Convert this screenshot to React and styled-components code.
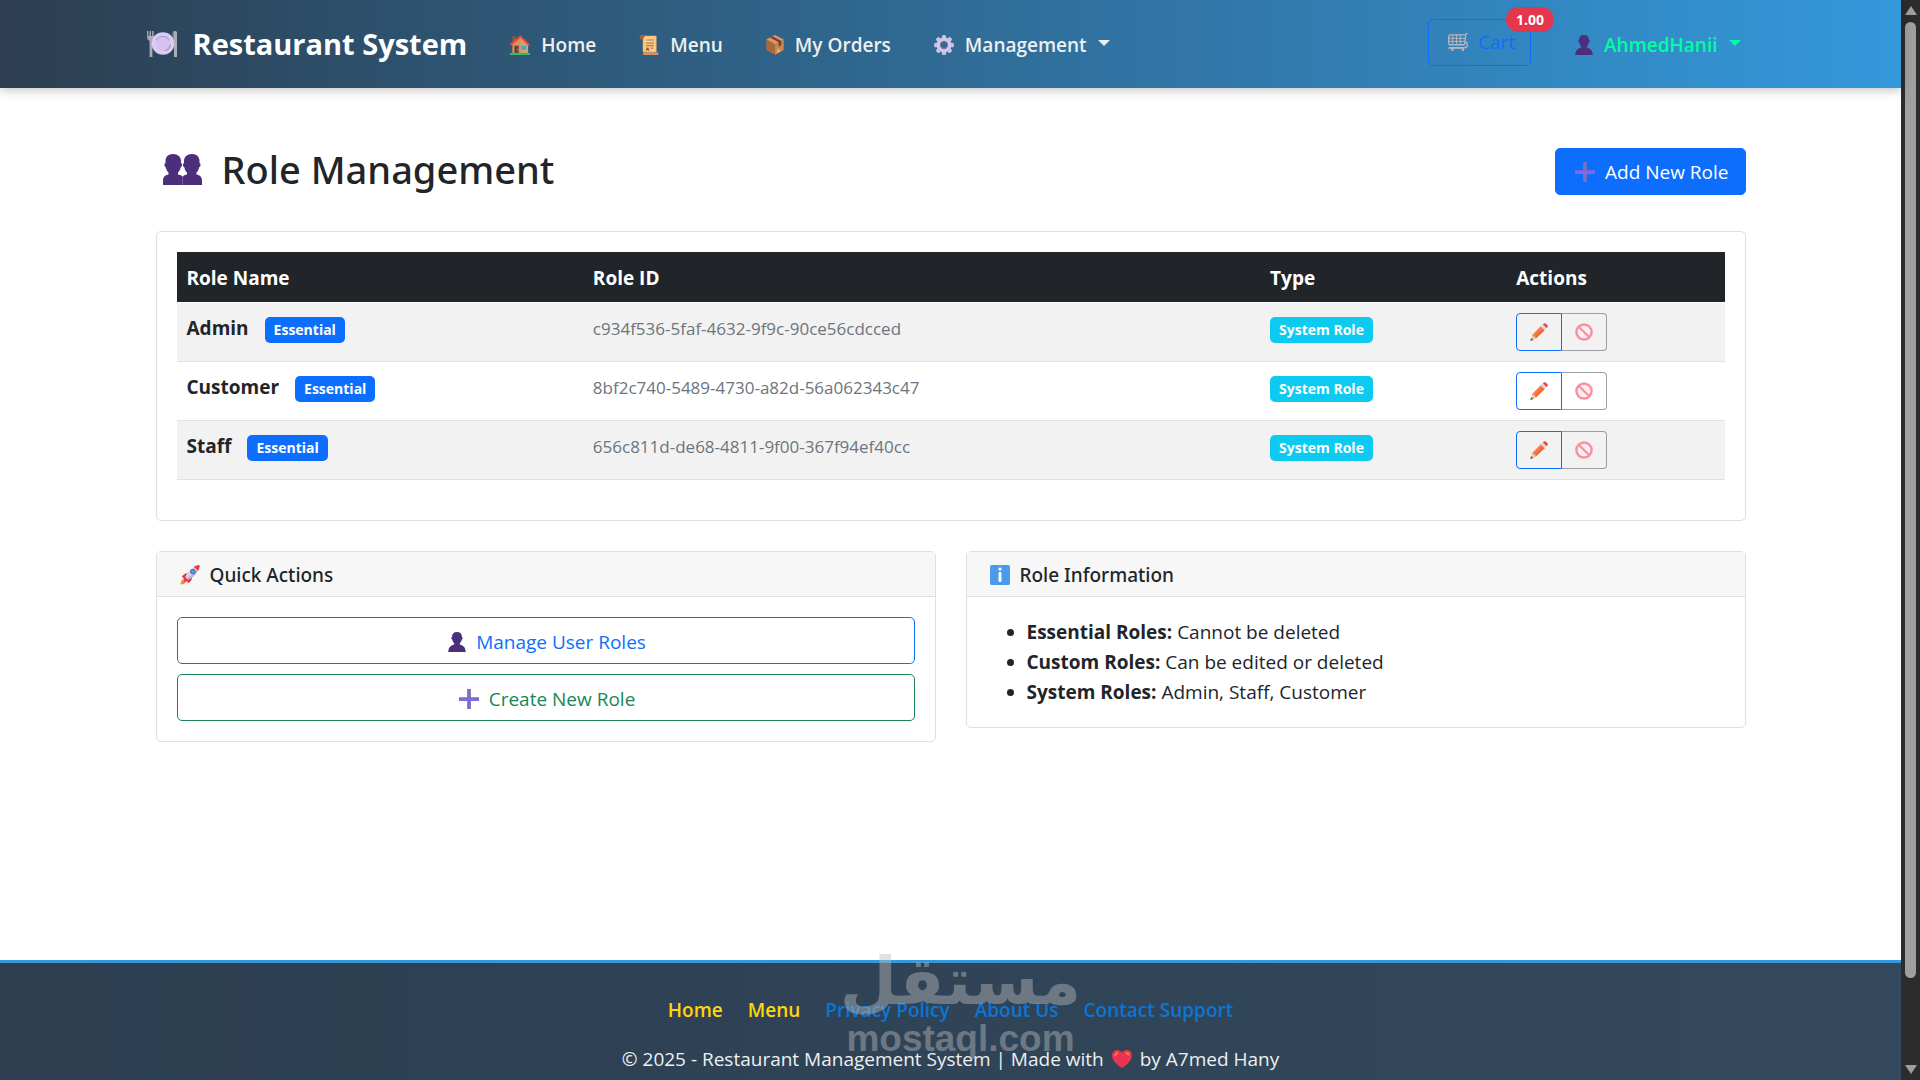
import React from "react";
import styled, { createGlobalStyle, css } from "styled-components";

const font = '"Open Sans", "Noto Sans", "DejaVu Sans", sans-serif';
const headingFont = '"Noto Sans", "Open Sans", "DejaVu Sans", sans-serif';

const Global = createGlobalStyle`
  *, *::before, *::after { box-sizing: border-box; }
  body { margin: 0; background: #fff; color: #212529; font: 400 19px/30px ${font}; }
  a { text-decoration: none; color: inherit; }
  button { font: inherit; cursor: pointer; }
`;

/* ---------- icons ---------- */

const Svg = styled.svg`
  display: block;
  flex: none;
  width: ${(p) => p.$w || 20}px;
  height: ${(p) => p.$h || p.$w || 20}px;
`;

const Icon = ({ w, h, box = "0 0 32 32", children }) => (
  <Svg $w={w} $h={h} viewBox={box} aria-hidden="true">
    {children}
  </Svg>
);

const PlateIcon = () => (
  <Icon w={30} h={26} box="0 0 30 26">
    <g fill="#a9adb8">
      <path d="M0 0h1.4v5h1.2V0H4v5h1.2V0h1.4v5H8V1l-.2 7L5.4 10v16H2.6V10L.3 8z" />
      <path d="M27 0h1.2a2 2 0 0 1 1.8 2v24h-3z" />
      <path d="M27 0a2 2 0 0 0-1.6 2v13H27z" fill="#7f8592" />
    </g>
    <circle cx="16" cy="12.5" r="11.3" fill="#dccbf3" />
    <circle cx="16" cy="12.5" r="7.6" fill="#d5c2f0" />
    <path d="M9.2 9a7.6 7.6 0 0 1 13 .2" fill="none" stroke="#b79ddd" strokeWidth="1.2" />
    <path d="M23.4 13.5a7.6 7.6 0 0 1-5.2 6.2" fill="none" stroke="#a58ec7" strokeWidth="1.2" />
  </Icon>
);

const HouseIcon = () => (
  <Icon>
    <path fill="#8d5a45" d="M4 2h5v10H4z" />
    <path fill="#e0a066" d="M4 14 17 4l12 12v13H4z" />
    <path fill="#c98350" d="M4 14 17 4v25H4z" opacity=".45" />
    <path fill="#6d3f3a" d="M7 17h7v12H7z" />
    <path fill="#f9c23c" d="M12 22h1.5v2H12z" />
    <path fill="#26b3f0" d="M18 17h8v7h-8z" />
    <path fill="none" stroke="#f0473e" strokeWidth="3.2" strokeLinecap="round" strokeLinejoin="round" d="m2 15 14.500-12.500L30 15.500" />
    <path fill="#36b864" d="M0 28.500h32V32H0z" />
  </Icon>
);

const ScrollIcon = () => (
  <Icon>
    <path fill="#f9be72" d="M5 1h23v27H9c-2 0-3-1-3-3V6z" />
    <path fill="#ffd08d" d="M9 3h17v23H9z" />
    <path fill="#a65f45" d="M1 2c0-1 1-2 3-2h6L6 7H3C1 7 1 4 1 2z" />
    <path fill="#e08f5c" d="M9 28h22c1 0 1 4-2 4H9c-4 0-4-4 0-4z" />
    <path stroke="#b77945" strokeWidth="1.800" d="M12 8h12M11 13h13M11 17h13M11 21h5M18 21h5" />
    <path stroke="#8a4c34" strokeWidth="2" d="m11 25 3-3 2 3" fill="none" />
  </Icon>
);

const BoxIcon = () => (
  <Icon w={18} h={20} box="0 0 28 32">
    <path fill="#d99a62" d="M14 0 28 7 14 15 0 7z" />
    <path fill="#a9693f" d="m0 7 14 8v17L0 24z" />
    <path fill="#c88650" d="m28 7-14 8v17l14-8z" />
    <path fill="#7a3a34" d="m6 4 14 7.500v7l4-2V9.500L10 2z" />
    <path stroke="#ead0ae" strokeWidth="1.600" d="m17 25 4-2.200M17 28l6-3.300" />
  </Icon>
);

const GearIcon = () => (
  <Icon>
    <g fill="#c6bfe6">
      {[0, 45, 90, 135, 180, 225, 270, 315].map((a) => (
        <rect key={a} x="12.500" y="0" width="7" height="8" rx="2.500" transform={`rotate(${a} 16 16)`} />
      ))}
    </g>
    <circle cx="16" cy="16" r="8.800" fill="none" stroke="#d0c9eb" strokeWidth="6" />
    <circle cx="16" cy="16" r="5.800" fill="none" stroke="#7d7a99" strokeWidth="1.800" />
  </Icon>
);

const CartIcon = () => (
  <Icon w={20} h={18} box="0 0 32 29">
    <g fill="none" stroke="#b9b4bd" strokeWidth="2.200" strokeLinejoin="round" strokeLinecap="round">
      <path d="M31 0c-3 1-3 3-3 5l-1 11c0 2-1 3-3 3H4c-2 0-3-1-3-3V6c0-2 1-3 3-3h22" />
      <path d="M1 8.500h26M1 13.500h25M7.500 3v16M13.500 3v16M19.500 3v16" strokeWidth="1.600" />
      <path d="M27 15c3-1 4 1 4 4 0 4-2 5-5 5H2" />
      <path d="M2 24h22" strokeWidth="3" />
      <circle cx="7" cy="27" r="1" />
      <circle cx="24" cy="27" r="1" />
    </g>
  </Icon>
);

const bust = "M14 0c5 0 8 3 8 8 1.500 0 1.500 4-.3 4-.7 3-2 5-3.200 6v2c4 1 9 3 9.500 12H0c.5-9 5.500-11 9.500-12v-2c-1.200-1-2.500-3-3.200-6C4.500 12 4.500 8 6 8c0-5 3-8 8-8z";

const UserIcon = () => (
  <Icon w={18} h={20} box="0 0 28 32">
    <path fill="#4c2f7c" d={bust} />
  </Icon>
);

const UsersIcon = () => (
  <Icon w={39} h={31} box="0 0 39 31">
    <g fill="#4c2f7c">
      <path d="M10 0c5 0 8 3 8 7v2c1.400 0 1.400 4-.2 4-.6 3-1.800 4.500-2.800 5.500v2c3 .6 6 1.500 6 6.500v4H0v-4c0-5 3-5.900 5.500-6.500v-2c-1-1-2.200-2.500-2.800-5.500-1.600 0-1.600-4-.2-4V7c0-4 2.500-7 7.500-7z" />
      <path d="M29 0c5 0 7.500 3 7.500 7v2c1.400 0 1.400 4-.2 4-.6 3-1.800 4.500-2.800 5.500v2c2.500.6 5.500 1.500 5.500 6.500v4H19v-4c0-5 2-5.900 5-6.500v-2c-1-1-2.200-2.500-2.800-5.500-1.600 0-1.600-4-.2-4V7c0-4 3-7 8-7z" />
    </g>
    <path d="M19.500 31v-4c0-2.500 0-4.200 1.500-5.500" fill="none" stroke="#7a68a6" strokeWidth=".8" />
  </Icon>
);

const PlusIcon = () => (
  <Icon>
    <path fill="#7a6fc0" d="M13 0h6v13h13v6H19v13h-6V19H0v-6h13z" />
    <path fill="#8a63f5" d="M0 16h32v3H0z" />
  </Icon>
);

const PencilIcon = () => (
  <Icon w={18} h={18}>
    <path fill="#fb7a45" d="m20 5 7 7L10 28l-7-6z" />
    <path fill="#e4602f" d="m23.500 8.500 3.500 3.500L10 28l-3-3z" opacity=".55" />
    <path fill="#dcd6e6" d="m19 6 4-4 7 7-4 4z" />
    <path fill="#ee3f3f" d="m24 1.500c1.500-1.500 3-1.500 4.500 0L31 4c1 1.500 1 2.500-.5 4l-1 1L23 2.500z" />
    <path fill="#f2c69b" d="m4.500 20.500 7 7L2 31z" />
    <path fill="#5e5464" d="m2 26.500 4 3.500-5.500 2z" />
  </Icon>
);

const BannedIcon = () => (
  <Icon w={18} h={18}>
    <circle cx="16" cy="16" r="13.500" fill="#fbeef5" stroke="#f9919f" strokeWidth="4.400" />
    <path d="m7 7 18 18" stroke="#f9919f" strokeWidth="4" />
  </Icon>
);

const RocketIcon = () => (
  <Icon>
    <path fill="#fb8b3c" d="M1 31c0-4 1-7 4-7l4 4c-1 2-4 3-8 3z" />
    <path fill="#e0344b" d="m3 18 6-5 5 1-7 9zM14 29l5-6-1-6-8 8z" />
    <path fill="#d7d3e4" d="M8 20C12 10 19 3 29 2c1 10-6 17-17 22z" />
    <path fill="#b8b2cc" d="M29 2c1 10-6 17-17 22l-2-2C19 17 25 11 29 2z" />
    <path fill="#f0384d" d="M22 3c3-2 6-3 9-3 1 3 0 6-2 9z" />
    <path fill="#f0384d" d="m8 19 5 5-5 4-3-4z" />
    <circle cx="20.500" cy="10.500" r="3.600" fill="#4aa3ec" stroke="#45608d" strokeWidth="1.600" />
  </Icon>
);

const InfoIcon = () => (
  <Icon>
    <rect width="32" height="32" rx="3" fill="#4c9aec" />
    <circle cx="16" cy="6.500" r="2.600" fill="#fff" />
    <rect x="13.700" y="11" width="4.600" height="16" rx="2" fill="#fff" />
  </Icon>
);

const HeartIcon = () => (
  <Icon w={20} h={18} box="0 0 32 29">
    <path fill="#ea3350" d="M16 29C6 23 0 16 0 9c0-5 3-9 8-9 4 0 7 2 8 5 1-3 4-5 8-5 5 0 8 4 8 9 0 7-6 14-16 20z" />
    <path fill="#fb8148" d="M7 4c-2 1-3 3-3 5s2 1 3-1 3-2 3-3-1-2-3-1zM21 5c1 0 3 4 5 4s3-2 1-4-6-2-6 0z" />
  </Icon>
);

/* ---------- shell ---------- */

const Shell = styled.div`
  display: flex;
  height: 100vh;
  overflow: hidden;
`;

const Page = styled.div`
  display: flex;
  flex: 1;
  flex-direction: column;
  min-width: 0;
`;

const ScrollTrack = styled.div`
  display: flex;
  flex: none;
  flex-direction: column;
  align-items: center;
  gap: 7px;
  width: 19px;
  padding: 6px 0;
  background: #2c2c2c;
`;

const ScrollArrow = styled.span`
  border: 6px solid transparent;
  border-top-width: ${(p) => (p.$down ? 9 : 0)}px;
  border-bottom-width: ${(p) => (p.$down ? 0 : 9)}px;
  border-${(p) => (p.$down ? "top" : "bottom")}-color: #9f9f9f;
`;

const ScrollRail = styled.div`
  display: grid;
  flex: 1;
  grid-template-rows: 12fr 1fr;
  width: 11px;
`;

const ScrollThumb = styled.div`
  border-radius: 6px;
  background: #9f9f9f;
`;

/* ---------- navbar ---------- */

const Navbar = styled.header`
  position: relative;
  flex: none;
  background: linear-gradient(90deg, #2c3e50, #3498db);
  box-shadow: 0 2px 10px rgba(0, 0, 0, 0.25);
`;

const NavInner = styled.div`
  display: flex;
  align-items: center;
  width: 100%;
  max-width: 1620px;
  height: 88px;
  margin: 0 auto;
  padding: 0 20px 0 6px;
`;

const Brand = styled.a`
  display: flex;
  align-items: center;
  gap: 16px;
  color: #fff;
  font-size: 29px;
  font-weight: 700;
  line-height: 44px;
  white-space: nowrap;
`;

const NavLinks = styled.nav`
  display: flex;
  gap: 43px;
  margin-left: 43px;
`;

const navItem = css`
  display: flex;
  align-items: center;
  gap: 11px;
  padding: 2px 0 0;
  border: 0;
  background: none;
  color: ${(p) => (p.$user ? "#00ffa2" : "#ecf0f1")};
  font-weight: 600;
  line-height: 30px;
  white-space: nowrap;
`;

const NavLink = styled.a`${navItem}`;
const NavToggle = styled.button`${navItem}`;

const Caret = styled.span`
  margin-bottom: 4px;
  border: 6px solid transparent;
  border-top-color: currentColor;
  border-bottom: 0;
`;

const NavRight = styled.div`
  display: flex;
  align-items: center;
  gap: 44px;
  margin-left: auto;
`;

const CartButton = styled.button`
  position: relative;
  display: flex;
  align-items: center;
  gap: 10px;
  height: 47px;
  margin-bottom: 4px;
  padding: 0 15px 0 19px;
  border: 1px solid #0d6efd;
  border-radius: 5px;
  background: none;
  color: #0d6efd;
`;

const CartBadge = styled.span`
  position: absolute;
  top: -13px;
  right: -24px;
  padding: 0 10px;
  border-radius: 13px;
  background: #e4364c;
  color: #fff;
  font-size: 14px;
  font-weight: 700;
  line-height: 25px;
`;

/* ---------- content ---------- */

const Main = styled.main`
  flex: 1;
  width: 100%;
  max-width: 1620px;
  min-height: 0;
  margin: 0 auto;
  padding: 55px 15px 0;
`;

const TitleRow = styled.div`
  display: flex;
  align-items: center;
  justify-content: space-between;
  margin-bottom: 32px;
`;

const Title = styled.h1`
  display: flex;
  align-items: center;
  gap: 20px;
  margin: 0;
  padding: 2px 0 6px 7px;
  font-family: ${headingFont};
  font-size: 38px;
  font-weight: 500;
  line-height: 48px;
`;

const tones = {
  solid: css`border-color: #0d6efd; background: #0d6efd; color: #fff;`,
  primary: css`border-color: #0d6efd; background: #fff; color: #0d6efd;`,
  success: css`border-color: #198754; background: #fff; color: #198754;`,
};

const Button = styled.button`
  display: flex;
  align-items: center;
  justify-content: center;
  gap: 10px;
  height: 47px;
  padding: 2px 16px 0 19px;
  border: 1px solid;
  border-radius: 5px;
  ${(p) => tones[p.$tone]}
`;

const Card = styled.section`
  border: 1px solid #dfdfdf;
  border-radius: 5px;
  background: #fff;
`;

const CardHeader = styled.h2`
  display: flex;
  align-items: center;
  gap: 10px;
  height: 45px;
  margin: 0;
  padding: 2px 23px 0;
  border-bottom: 1px solid #dfdfdf;
  background: #f7f7f7;
  font-family: ${headingFont};
  font-size: 19px;
  font-weight: 500;
`;

const CardBody = styled.div`
  padding: 20px;
`;

const Stack = styled.div`
  display: grid;
  gap: 10px;
`;

const Columns = styled.div`
  display: grid;
  grid-template-columns: 1fr 1fr;
  gap: 30px;
  align-items: start;
  margin-top: 30px;
`;

const Table = styled.table`
  width: 100%;
  margin-bottom: 20px;
  border-collapse: separate;
  border-spacing: 0;
  table-layout: fixed;
`;

const Th = styled.th`
  width: ${(p) => p.$w};
  padding: 11px 10px 9px;
  border-bottom: 1px solid #fff;
  background: #212529;
  background-clip: padding-box;
  color: #fff;
  font-weight: 700;
  text-align: left;
`;

const Row = styled.tr`
  &:nth-child(odd) { background: #f2f2f2; }
`;

const Td = styled.td`
  padding: 10px;
  border-bottom: 1px solid #dee2e6;
  vertical-align: top;
`;

const RoleCell = styled.div`
  display: flex;
  align-items: flex-end;
  gap: 16px;
  height: 30px;
`;

const RoleId = styled.span`
  color: #6c757d;
  font-size: 17px;
`;

const Badge = styled.span`
  padding: 0 9px;
  border-radius: 5px;
  background: ${(p) => (p.$info ? "#0dcaf0" : "#0d6efd")};
  color: #fff;
  font-size: 14px;
  font-weight: 700;
  line-height: 26px;
  white-space: nowrap;
`;

const ButtonGroup = styled.div`
  display: flex;
`;

const IconButton = styled.button`
  display: grid;
  place-items: center;
  width: ${(p) => (p.$muted ? 45 : 46)}px;
  height: 38px;
  padding: 0;
  border: 1px solid ${(p) => (p.$muted ? "#9b9fa3" : "#0d6efd")};
  border-left-width: ${(p) => (p.$muted ? 0 : 1)}px;
  border-radius: ${(p) => (p.$muted ? "0 4px 4px 0" : "4px 0 0 4px")};
  background: transparent;
`;

const InfoList = styled.ul`
  margin: 0;
  padding-left: 40px;
`;

/* ---------- footer ---------- */

const Footer = styled.footer`
  position: relative;
  display: flex;
  flex: none;
  flex-direction: column;
  align-items: center;
  gap: 19px;
  padding: 32px 20px 6px;
  border-top: 3px solid #3498db;
  background: linear-gradient(90deg, #2c3e50, #34495e);
  color: #ecf0f1;
`;

const FooterLinks = styled.nav`
  display: flex;
  gap: 25px;
`;

const FooterLink = styled.a`
  color: ${(p) => (p.$gold ? "#ffd60a" : "#0d75d3")};
  font-weight: 600;
`;

const Copyright = styled.p`
  display: flex;
  align-items: center;
  gap: 8px;
  margin: 0;
`;

const Watermark = styled.div`
  position: absolute;
  top: -18px;
  left: 50%;
  display: flex;
  flex-direction: column;
  align-items: center;
  width: 232px;
  margin-left: -106px;
  color: #bcbcbc;
  opacity: 0.43;
  pointer-events: none;
  white-space: nowrap;
`;

const WatermarkArabic = styled.span`
  font: 700 66px/74px "DejaVu Sans", sans-serif;
`;

const WatermarkLatin = styled.span`
  font: 700 37px/40px "Liberation Sans", sans-serif;
`;

const roles = [
  ["Admin", "c934f536-5faf-4632-9f9c-90ce56cdcced"],
  ["Customer", "8bf2c740-5489-4730-a82d-56a062343c47"],
  ["Staff", "656c811d-de68-4811-9f00-367f94ef40cc"],
];

const facts = [
  ["Essential Roles:", "Cannot be deleted"],
  ["Custom Roles:", "Can be edited or deleted"],
  ["System Roles:", "Admin, Staff, Customer"],
];

export default function App() {
  return (
    <>
      <Global />
      <Shell>
        <Page>
          <Navbar>
            <NavInner>
              <Brand href="#"><PlateIcon />Restaurant System</Brand>
              <NavLinks aria-label="Main">
                <NavLink href="#"><HouseIcon />Home</NavLink>
                <NavLink href="#"><ScrollIcon />Menu</NavLink>
                <NavLink href="#"><BoxIcon />My Orders</NavLink>
                <NavToggle type="button"><GearIcon />Management<Caret /></NavToggle>
              </NavLinks>
              <NavRight>
                <CartButton type="button">
                  <CartIcon />Cart<CartBadge>1.00</CartBadge>
                </CartButton>
                <NavToggle type="button" $user><UserIcon />AhmedHanii<Caret /></NavToggle>
              </NavRight>
            </NavInner>
          </Navbar>

          <Main>
            <TitleRow>
              <Title><UsersIcon />Role Management</Title>
              <Button type="button" $tone="solid"><PlusIcon />Add New Role</Button>
            </TitleRow>

            <Card>
              <CardBody>
                <Table>
                  <thead>
                    <tr>
                      <Th $w="26.25%">Role Name</Th>
                      <Th $w="43.75%">Role ID</Th>
                      <Th $w="15.9%">Type</Th>
                      <Th>Actions</Th>
                    </tr>
                  </thead>
                  <tbody>
                    {roles.map(([name, id]) => (
                      <Row key={id}>
                        <Td>
                          <RoleCell><strong>{name}</strong><Badge>Essential</Badge></RoleCell>
                        </Td>
                        <Td><RoleId>{id}</RoleId></Td>
                        <Td><RoleCell><Badge $info>System Role</Badge></RoleCell></Td>
                        <Td>
                          <ButtonGroup>
                            <IconButton type="button" aria-label={`Edit ${name}`}><PencilIcon /></IconButton>
                            <IconButton type="button" $muted disabled aria-label={`Delete ${name}`}><BannedIcon /></IconButton>
                          </ButtonGroup>
                        </Td>
                      </Row>
                    ))}
                  </tbody>
                </Table>
              </CardBody>
            </Card>

            <Columns>
              <Card>
                <CardHeader><RocketIcon />Quick Actions</CardHeader>
                <CardBody>
                  <Stack>
                    <Button type="button" $tone="primary"><UserIcon />Manage User Roles</Button>
                    <Button type="button" $tone="success"><PlusIcon />Create New Role</Button>
                  </Stack>
                </CardBody>
              </Card>
              <Card>
                <CardHeader><InfoIcon />Role Information</CardHeader>
                <CardBody>
                  <InfoList>
                    {facts.map(([label, text]) => (
                      <li key={label}><strong>{label}</strong> {text}</li>
                    ))}
                  </InfoList>
                </CardBody>
              </Card>
            </Columns>
          </Main>

          <Footer>
            <FooterLinks aria-label="Footer">
              <FooterLink href="#" $gold>Home</FooterLink>
              <FooterLink href="#" $gold>Menu</FooterLink>
              <FooterLink href="#">Privacy Policy</FooterLink>
              <FooterLink href="#">About Us</FooterLink>
              <FooterLink href="#">Contact Support</FooterLink>
            </FooterLinks>
            <Copyright>
              © 2025 - Restaurant Management System | Made with <HeartIcon /> by A7med Hany
            </Copyright>
            <Watermark>
              <WatermarkArabic lang="ar" dir="rtl">مستقل</WatermarkArabic>
              <WatermarkLatin>mostaql.com</WatermarkLatin>
            </Watermark>
          </Footer>
        </Page>

        <ScrollTrack aria-hidden="true">
          <ScrollArrow />
          <ScrollRail><ScrollThumb /></ScrollRail>
          <ScrollArrow $down />
        </ScrollTrack>
      </Shell>
    </>
  );
}
